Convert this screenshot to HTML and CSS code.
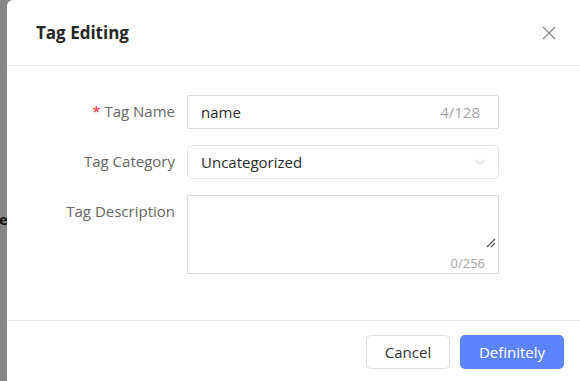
FILE: index.html
```html
<!DOCTYPE html>
<html lang="en">
<head>
    <meta charset="UTF-8">
    <meta name="viewport" content="width=device-width, initial-scale=1.0">
    <title>Tag Editing</title>
    <link rel="stylesheet" href="styles.css">
</head>
<body>

    <!-- page behind the mask -->
    <div class="behind">
        <span class="behind-text">Name</span>
    </div>

    <div class="dialog">
        <div class="dialog-header">
            <span class="dialog-title">Tag Editing</span>
            <svg class="close-icon" width="16" height="16" viewBox="0 0 16 16">
                <path d="M2 2 L14 14 M14 2 L2 14" stroke="#8c8c8c" stroke-width="1.4" fill="none"/>
            </svg>
        </div>

        <form class="dialog-body">
            <div class="form-row">
                <label class="form-label"><span class="required">*</span> Tag Name</label>
                <div class="field input-field">
                    <span class="field-text">name</span>
                    <span class="counter">4/128</span>
                </div>
            </div>

            <div class="form-row">
                <label class="form-label">Tag Category</label>
                <div class="field select-field">
                    <span class="field-text">Uncategorized</span>
                    <svg width="12" height="8" viewBox="0 0 12 8">
                        <path d="M1 1.5 L6 6.5 L11 1.5" stroke="#c8c8c8" stroke-width="1" fill="none"/>
                    </svg>
                </div>
            </div>

            <div class="form-row">
                <label class="form-label">Tag Description</label>
                <div class="field textarea-field">
                    <svg class="resize-handle" width="10" height="10" viewBox="0 0 10 10">
                        <path d="M1 9 L9 1 M5 9 L9 5" stroke="#555" stroke-width="1.2" fill="none"/>
                    </svg>
                    <span class="counter textarea-counter">0/256</span>
                </div>
            </div>
        </form>

        <div class="dialog-footer">
            <button type="button" class="btn btn-cancel">Cancel</button>
            <button type="submit" class="btn btn-primary">Definitely</button>
        </div>
    </div>

</body>
</html>
```

FILE: styles.css
```css
body {
    font-family: "Open Sans", "Noto Sans", Arial, sans-serif;
    background-color: #878787;
    margin: 0;
    padding: 0;
    display: flex;
    height: 381px;
    overflow: hidden;
}
/* Page behind the mask */
.behind {
    width: 7px;
    overflow: hidden;
    display: flex;
    justify-content: flex-end;
    padding-top: 209px;
}
.behind-text {
    font-size: 15px;
    font-weight: bold;
    color: #111;
    white-space: nowrap;
    margin-right: -1px;
}
/* Dialog */
.dialog {
    flex: 1;
    background: white;
    border-radius: 6px 0 0 0;
    display: flex;
    flex-direction: column;
}
.dialog-header {
    height: 65px;
    display: flex;
    align-items: center;
    justify-content: space-between;
    padding: 0 23px 0 29px;
    border-bottom: 1px solid #ebebeb;
}
.dialog-title {
    font-size: 17px;
    font-weight: bold;
    color: #262626;
}
.close-icon {
    margin-top: 1px;
}
/* Form */
.dialog-body {
    height: 255px;
    padding-top: 29px;
    box-sizing: border-box;
    border-bottom: 1px solid #ebecf3;
    margin: 0;
}
.form-row {
    display: flex;
    align-items: flex-start;
    margin-bottom: 16px;
}
.form-label {
    width: 180px;
    padding-right: 12px;
    box-sizing: border-box;
    text-align: right;
    font-size: 15px;
    color: #666;
    line-height: 34px;
    margin-top: -1px;
}
.required {
    color: #f5222d;
}
.field {
    width: 312px;
    height: 34px;
    box-sizing: border-box;
    border: 1px solid #dcdde3;
    display: flex;
    align-items: center;
    justify-content: space-between;
    padding: 0 13px 0 13px;
    font-size: 15px;
}
.input-field {
    border-radius: 2px;
    padding-right: 18px;
}
.select-field {
    border-color: #e4e5ea;
    border-radius: 5px;
    padding-right: 12px;
}
.field-text {
    color: #2a2a2a;
}
.counter {
    color: #a3a3a3;
}
.textarea-field {
    height: 79px;
    border-color: #dcdcdc;
    position: relative;
    flex-direction: column;
    align-items: flex-end;
    justify-content: flex-end;
    padding: 0 13px 1px 0;
}
.textarea-counter {
    font-size: 13px;
}
.resize-handle {
    position: absolute;
    right: 2px;
    bottom: 25px;
}
/* Footer */
.dialog-footer {
    display: flex;
    justify-content: flex-end;
    gap: 10px;
    padding: 14px 16px 0 0;
}
.btn {
    height: 34px;
    border-radius: 5px;
    font-family: inherit;
    font-size: 15px;
    cursor: pointer;
}
.btn-cancel {
    width: 84px;
    background: white;
    border: 1px solid #dedede;
    color: #333;
}
.btn-primary {
    width: 104px;
    background-color: #5b84fc;
    border: none;
    color: white;
    font-weight: 500;
}
```
